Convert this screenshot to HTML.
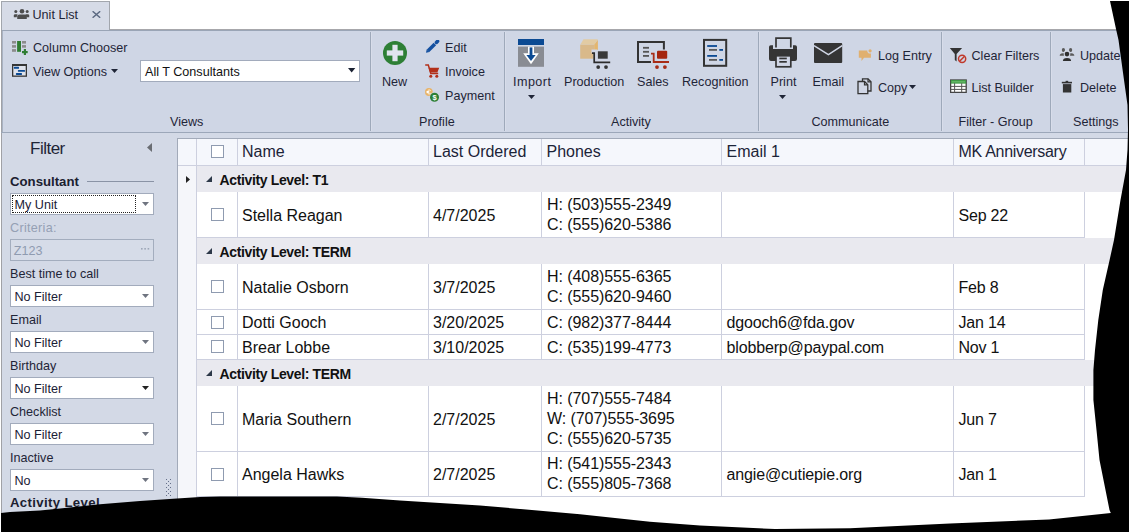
<!DOCTYPE html>
<html><head><meta charset="utf-8"><style>
html,body{margin:0;padding:0;}
body{width:1129px;height:532px;overflow:hidden;position:relative;background:#fff;font-family:"Liberation Sans", sans-serif;}
.t{position:absolute;white-space:nowrap;}
.b{position:absolute;}
</style></head><body>
<div class="b" style="left:1px;top:1px;width:109px;height:30px;background:#d6dbe7;border:1px solid #a2a6ad;border-bottom:none;box-sizing:border-box"></div>
<svg class="b" style="left:13px;top:8px" width="17" height="12" viewBox="0 0 17 12"><circle cx="9" cy="3.3" r="2.3" fill="#4d4d4d"/><circle cx="2.8" cy="3.6" r="1.5" fill="#4d4d4d"/><circle cx="14.2" cy="3.6" r="1.5" fill="#4d4d4d"/><path d="M4.2 11 V8.6 Q4.2 6.6 6.5 6.6 H11.5 Q13.8 6.6 13.8 8.6 V11Z" fill="#4d4d4d"/><path d="M0.8 9.2 V7.4 Q0.8 6.2 2.2 6.2 H4.6 L3.6 9.2Z" fill="#4d4d4d"/><path d="M16.2 9.2 V7.4 Q16.2 6.2 14.8 6.2 H12.4 L13.4 9.2Z" fill="#4d4d4d"/></svg>
<div class="t" style="left:32.5px;top:8.83px;font-size:12.6px;line-height:12.6px;color:#1f2537;font-weight:400;">Unit List</div>
<svg class="b" style="left:92px;top:11px" width="9" height="7" viewBox="0 0 9 7"><path d="M0.6 0.3 L8.2 6.7 M8.2 0.3 L0.6 6.7" stroke="#5a6880" stroke-width="1.5"/></svg>
<div class="b" style="left:110px;top:29px;width:1019px;height:1px;background:#a7a7ab"></div>
<div class="b" style="left:1px;top:30px;width:1128px;height:1px;background:#9aa5b6"></div>
<div class="b" style="left:1px;top:31px;width:1128px;height:101px;background:#cfd6e5"></div>
<div class="b" style="left:1px;top:30px;width:1px;height:502px;background:#a0a1a6"></div>
<div class="b" style="left:2px;top:31px;width:1px;height:501px;background:#a9b3c3"></div>
<div class="b" style="left:1px;top:132px;width:1128px;height:1px;background:#9ca7b9"></div>
<div class="b" style="left:370px;top:32px;width:1px;height:99px;background:#9ea9ba"></div>
<div class="b" style="left:371px;top:32px;width:1px;height:99px;background:#d8ddea"></div>
<div class="b" style="left:504px;top:32px;width:1px;height:99px;background:#9ea9ba"></div>
<div class="b" style="left:505px;top:32px;width:1px;height:99px;background:#d8ddea"></div>
<div class="b" style="left:758px;top:32px;width:1px;height:99px;background:#9ea9ba"></div>
<div class="b" style="left:759px;top:32px;width:1px;height:99px;background:#d8ddea"></div>
<div class="b" style="left:941px;top:32px;width:1px;height:99px;background:#9ea9ba"></div>
<div class="b" style="left:942px;top:32px;width:1px;height:99px;background:#d8ddea"></div>
<div class="b" style="left:1050px;top:32px;width:1px;height:99px;background:#9ea9ba"></div>
<div class="b" style="left:1051px;top:32px;width:1px;height:99px;background:#d8ddea"></div>
<svg class="b" style="left:12px;top:41px" width="17" height="15" viewBox="0 0 17 15"><rect x="0" y="0" width="4" height="2.6" fill="#8c8c8c"/><rect x="0" y="4.1" width="4" height="2.6" fill="#8c8c8c"/><rect x="0" y="8.1" width="4" height="2.7" fill="#8c8c8c"/><rect x="5.1" y="0" width="3.9" height="10.8" fill="#2f7d32"/><rect x="10" y="0" width="4" height="2.6" fill="#8c8c8c"/><rect x="10" y="4.1" width="4" height="2.6" fill="#8c8c8c"/><rect x="10" y="10" width="5.7" height="2.2" fill="#2f7d32"/><rect x="11.8" y="8" width="2.2" height="6" fill="#2f7d32"/></svg>
<div class="t" style="left:33px;top:42.33px;font-size:12.6px;line-height:12.6px;color:#1f2537;font-weight:400;">Column Chooser</div>
<svg class="b" style="left:12px;top:64px" width="15" height="13" viewBox="0 0 15 13"><rect x="0" y="0" width="15" height="12.8" fill="#353535"/><rect x="1.3" y="2" width="12.4" height="9.5" fill="#dfe3ec"/><rect x="1.9" y="2.8" width="5.1" height="2" rx="0.6" fill="#0b4a93"/><rect x="5.9" y="6" width="7.1" height="1.8" rx="0.6" fill="#0b4a93"/><rect x="3.9" y="9.1" width="6.1" height="1.8" rx="0.6" fill="#0b4a93"/></svg>
<div class="t" style="left:33px;top:65.83px;font-size:12.6px;line-height:12.6px;color:#1f2537;font-weight:400;">View Options</div>
<svg class="b" style="left:111px;top:69px" width="7" height="4" viewBox="0 0 7 4"><path d="M0 0 H7 L3.5 4Z" fill="#1f2537"/></svg>
<div class="b" style="left:140px;top:60px;width:220px;height:22px;background:#fff;border:1px solid #a2abbc;box-sizing:border-box"></div>
<div class="t" style="left:145px;top:65.83px;font-size:12.6px;line-height:12.6px;color:#111;font-weight:400;">All T Consultants</div>
<svg class="b" style="left:348px;top:68px" width="8" height="5" viewBox="0 0 8 5"><path d="M0 0 H7.3 L3.65 4.6Z" fill="#1b2233"/></svg>
<div class="t" style="left:170px;top:115.93px;font-size:12.6px;line-height:12.6px;color:#1f2537;font-weight:400;">Views</div>
<svg class="b" style="left:383px;top:41px" width="24" height="24" viewBox="0 0 24 24"><circle cx="12" cy="12" r="12" fill="#2d7f35"/><rect x="9.4" y="3.8" width="5.2" height="16.4" fill="#e0e4ee"/><rect x="3.8" y="9.4" width="16.4" height="5.2" fill="#e0e4ee"/></svg>
<div class="t" style="left:382px;top:76.13px;font-size:12.6px;line-height:12.6px;color:#1f2537;font-weight:400;">New</div>
<svg class="b" style="left:425px;top:40px" width="15" height="14" viewBox="0 0 15 14"><path d="M1 12.8 L1.7 9.3 L4.5 12.1Z" fill="#1450a0"/><path d="M3.1 10.7 L9.9 3.9" stroke="#1450a0" stroke-width="3.5"/><path d="M11.4 2.4 L12.6 1.2" stroke="#1450a0" stroke-width="3.5" stroke-linecap="round"/></svg>
<div class="t" style="left:445px;top:42.33px;font-size:12.6px;line-height:12.6px;color:#1f2537;font-weight:400;">Edit</div>
<svg class="b" style="left:425px;top:64px" width="15" height="14" viewBox="0 0 15 14"><path d="M0.2 1 H3.3 L5.8 9.4 H13.2" fill="none" stroke="#b3301a" stroke-width="1.5"/><path d="M3.6 3.8 H14.2 L12.4 8.6 H5Z" fill="#b3301a"/><circle cx="5.8" cy="12.2" r="1.5" fill="#b3301a"/><circle cx="11.8" cy="12.2" r="1.5" fill="#b3301a"/></svg>
<div class="t" style="left:445px;top:65.63px;font-size:12.6px;line-height:12.6px;color:#1f2537;font-weight:400;">Invoice</div>
<svg class="b" style="left:424px;top:87px" width="16" height="16" viewBox="0 0 16 16"><circle cx="4.9" cy="5" r="3.9" fill="#e8b46a"/><path d="M6.6 3.6 Q5.6 2.7 4.5 3.2 Q3.3 3.8 3.4 5 Q3.5 6.4 4.6 6.8 Q5.6 7.1 6.6 6.4 M2.5 4.5 H5.3 M2.5 5.6 H5.3" fill="none" stroke="#fff" stroke-width="0.9"/><circle cx="10.5" cy="10.3" r="5" fill="#d0d6e5"/><circle cx="10.5" cy="10.3" r="4.5" fill="#2d7f35"/><text x="10.5" y="13.1" font-size="7.6" font-family="Liberation Sans" font-weight="700" fill="#fff" text-anchor="middle">$</text></svg>
<div class="t" style="left:445px;top:89.53px;font-size:12.6px;line-height:12.6px;color:#1f2537;font-weight:400;">Payment</div>
<div class="t" style="left:419px;top:115.93px;font-size:12.6px;line-height:12.6px;color:#1f2537;font-weight:400;">Profile</div>
<svg class="b" style="left:518px;top:39px" width="26" height="28" viewBox="0 0 26 28"><rect x="0" y="0" width="26" height="6" fill="#0b4a93"/><rect x="0" y="7.6" width="26" height="20.2" fill="#898c93"/><rect x="10" y="7.6" width="6" height="7" fill="#fff"/><path d="M5.2 14.2 H20.8 L13 25.2Z" fill="#fff"/><rect x="11.6" y="8.4" width="2.8" height="8" fill="#0b4a93"/><path d="M8.4 16 H17.6 L13 22Z" fill="#0b4a93"/></svg>
<div class="t" style="left:513px;top:75.93px;font-size:12.6px;line-height:12.6px;color:#1f2537;font-weight:400;letter-spacing:0.45px">Import</div>
<svg class="b" style="left:528px;top:95px" width="7" height="4" viewBox="0 0 7 4"><path d="M0 0 H7 L3.5 4Z" fill="#1f2537"/></svg>
<svg class="b" style="left:580px;top:39px" width="31" height="31" viewBox="0 0 31 31"><path d="M0.2 5.8 L3.5 0.2 H17.9 L14.2 5.8Z" fill="#e2cba3"/><path d="M0.2 5.8 H14.2 V19.7 H0.2Z" fill="#d9b98a"/><path d="M14.2 5.8 L17.9 0.8 V12 L14.2 14Z" fill="#e4b66e"/><path d="M11.5 12.3 H15.2 V22 H30" fill="none" stroke="#d0d6e5" stroke-width="3.4"/><rect x="16.4" y="10.8" width="12.8" height="10.4" fill="#d0d6e5"/><path d="M12 14.1 H14.2 V23.4 H30.2" fill="none" stroke="#2b2b2b" stroke-width="1.7"/><rect x="17.9" y="12.3" width="9.8" height="7.4" fill="#3a3a3a"/><circle cx="18.2" cy="28.1" r="1.9" fill="#333"/><circle cx="26" cy="28.1" r="1.9" fill="#333"/></svg>
<div class="t" style="left:564px;top:75.93px;font-size:12.6px;line-height:12.6px;color:#1f2537;font-weight:400;">Production</div>
<svg class="b" style="left:637px;top:39px" width="33" height="31" viewBox="0 0 33 31"><path d="M26.9 10.5 V3 H1 V22.9 H14" fill="none" stroke="#333" stroke-width="2"/><rect x="6" y="7.9" width="6" height="1.8" fill="#555"/><rect x="6" y="11.9" width="6" height="1.8" fill="#555"/><rect x="6" y="16" width="6" height="1.8" fill="#555"/><path d="M14 14.6 H16.7 V23 H32" fill="none" stroke="#a82c16" stroke-width="1.8"/><rect x="20" y="11.8" width="10.2" height="7.9" rx="1" fill="#a5260f"/><circle cx="20" cy="28.1" r="1.9" fill="#a82c16"/><circle cx="27.9" cy="28.1" r="1.9" fill="#a82c16"/></svg>
<div class="t" style="left:637px;top:75.93px;font-size:12.6px;line-height:12.6px;color:#1f2537;font-weight:400;">Sales</div>
<svg class="b" style="left:703px;top:38px" width="25" height="30" viewBox="0 0 25 30"><rect x="1" y="1.9" width="22.2" height="25.9" fill="none" stroke="#333" stroke-width="2"/><rect x="4.2" y="7.1" width="9.8" height="1.8" fill="#0b4a93"/><rect x="6" y="11" width="8" height="1.8" fill="#5a5a5a"/><rect x="16.3" y="11" width="3.7" height="1.8" fill="#0b4a93"/><rect x="4.2" y="17" width="9.8" height="1.8" fill="#0b4a93"/><rect x="6" y="21" width="8" height="1.8" fill="#5a5a5a"/><rect x="16.3" y="21" width="3.7" height="1.8" fill="#0b4a93"/></svg>
<div class="t" style="left:682px;top:75.93px;font-size:12.6px;line-height:12.6px;color:#1f2537;font-weight:400;">Recognition</div>
<div class="t" style="left:611px;top:115.93px;font-size:12.6px;line-height:12.6px;color:#1f2537;font-weight:400;">Activity</div>
<svg class="b" style="left:768px;top:36px" width="30" height="32" viewBox="0 0 30 32"><path d="M8 11.5 V2.2 H22.8 V11.5" fill="none" stroke="#353535" stroke-width="1.7"/><path d="M1 11 Q1 9.2 2.8 9.2 H5 V13 H25 V9.2 H27.2 Q29 9.2 29 11 V23 Q29 25 27 25 H3 Q1 25 1 23Z" fill="#353535"/><rect x="8" y="19.8" width="14.8" height="11" fill="#d0d6e5" stroke="#353535" stroke-width="1.7"/><rect x="11.3" y="21.6" width="7.5" height="1.7" fill="#353535"/><rect x="11.3" y="25" width="7.5" height="1.7" fill="#353535"/></svg>
<div class="t" style="left:770.5px;top:76.03px;font-size:12.6px;line-height:12.6px;color:#1f2537;font-weight:400;">Print</div>
<svg class="b" style="left:779px;top:95px" width="7" height="4" viewBox="0 0 7 4"><path d="M0 0 H7 L3.5 4Z" fill="#1f2537"/></svg>
<svg class="b" style="left:814px;top:43px" width="29" height="20" viewBox="0 0 29 20"><rect x="0" y="0" width="28.2" height="20" rx="1" fill="#353535"/><path d="M0 2.6 L14.4 11.7 L28.2 2.6" fill="none" stroke="#d0d6e5" stroke-width="1.5"/></svg>
<div class="t" style="left:812.5px;top:76.03px;font-size:12.6px;line-height:12.6px;color:#1f2537;font-weight:400;">Email</div>
<svg class="b" style="left:858px;top:49px" width="14" height="13" viewBox="0 0 14 13"><path d="M0.8 1.4 H12.9 V8.8 H6 L3.5 12 V8.8 H0.8Z" fill="#e0b070"/><circle cx="12.1" cy="1.8" r="2.8" fill="#d0d6e5"/><circle cx="12.1" cy="1.8" r="1.6" fill="#e0b070"/></svg>
<div class="t" style="left:878px;top:49.63px;font-size:12.6px;line-height:12.6px;color:#1f2537;font-weight:400;">Log Entry</div>
<svg class="b" style="left:857px;top:78px" width="15" height="17" viewBox="0 0 15 17"><path d="M5.5 0.8 H11 L14 3.8 V13 H5.5Z" fill="#d0d6e5" stroke="#333" stroke-width="1.3"/><path d="M11 0.8 V3.8 H14" fill="none" stroke="#333" stroke-width="1.2"/><path d="M1 3.5 H7.5 L10.8 6.8 V15.6 H1Z" fill="#d0d6e5" stroke="#333" stroke-width="1.3"/><path d="M7.5 3.5 V6.8 H10.8" fill="none" stroke="#333" stroke-width="1.2"/></svg>
<div class="t" style="left:878px;top:81.93px;font-size:12.6px;line-height:12.6px;color:#1f2537;font-weight:400;">Copy</div>
<svg class="b" style="left:909px;top:85px" width="7" height="4" viewBox="0 0 7 4"><path d="M0 0 H7 L3.5 4Z" fill="#1f2537"/></svg>
<div class="t" style="left:811.5px;top:115.93px;font-size:12.6px;line-height:12.6px;color:#1f2537;font-weight:400;">Communicate</div>
<svg class="b" style="left:949px;top:47px" width="18" height="17" viewBox="0 0 18 17"><path d="M0.8 1 H13.1 L7.6 7 V14.5 L5.8 13 V7Z" fill="#333"/><circle cx="13.1" cy="11.8" r="3.6" fill="#d0d6e5" stroke="#c0392b" stroke-width="1.5"/><path d="M10.6 14.3 L15.6 9.3" stroke="#c0392b" stroke-width="1.5"/></svg>
<div class="t" style="left:971.5px;top:50.13px;font-size:12.6px;line-height:12.6px;color:#1f2537;font-weight:400;">Clear Filters</div>
<svg class="b" style="left:950px;top:79px" width="17" height="14" viewBox="0 0 17 14"><rect x="0.6" y="1" width="15.6" height="12.4" fill="#fff" stroke="#444" stroke-width="1.3"/><rect x="1.2" y="1.5" width="14.4" height="2.6" fill="#62b565" stroke="#3f9a45" stroke-width="1"/><path d="M0.6 7.4 H16.2 M0.6 10.4 H16.2 M4.6 4.2 V13.4 M11.7 4.2 V13.4" stroke="#555" stroke-width="1"/></svg>
<div class="t" style="left:971.5px;top:82.33px;font-size:12.6px;line-height:12.6px;color:#1f2537;font-weight:400;">List Builder</div>
<div class="t" style="left:958.5px;top:115.93px;font-size:12.6px;line-height:12.6px;color:#1f2537;font-weight:400;">Filter - Group</div>
<svg class="b" style="left:1059px;top:47px" width="16" height="15" viewBox="0 0 16 15"><ellipse cx="4.4" cy="2.9" rx="1.6" ry="2" fill="#5a5a5a"/><ellipse cx="11.6" cy="2.9" rx="1.6" ry="2" fill="#5a5a5a"/><path d="M0.7 8.8 Q0.7 6.2 3.6 6.2 H6.5 V8.8Z" fill="#5a5a5a"/><path d="M15.3 8.8 Q15.3 6.2 12.4 6.2 H9.5 V8.8Z" fill="#5a5a5a"/><circle cx="8" cy="7.1" r="3.3" fill="#d0d6e5"/><circle cx="8" cy="7.1" r="2.3" fill="#2e2e2e"/><path d="M3.1 14.2 Q3.1 10.4 8 10.4 Q12.9 10.4 12.9 14.2Z" fill="#d0d6e5"/><path d="M3.9 14 Q3.9 11 8 11 Q12.1 11 12.1 14Z" fill="#2e2e2e"/></svg>
<div class="t" style="left:1080px;top:50.13px;font-size:12.6px;line-height:12.6px;color:#1f2537;font-weight:400;">Update</div>
<svg class="b" style="left:1061px;top:80px" width="12" height="14" viewBox="0 0 12 14"><rect x="0.8" y="1.8" width="10.2" height="1.6" fill="#333"/><rect x="4.6" y="0.8" width="2.6" height="1.2" fill="#333"/><rect x="1.9" y="4.1" width="8.4" height="8.4" fill="#333"/></svg>
<div class="t" style="left:1080px;top:82.33px;font-size:12.6px;line-height:12.6px;color:#1f2537;font-weight:400;">Delete</div>
<div class="t" style="left:1073px;top:115.93px;font-size:12.6px;line-height:12.6px;color:#1f2537;font-weight:400;">Settings</div>
<div class="b" style="left:2px;top:133px;width:1127px;height:399px;background:#d3d9e6"></div>
<div class="t" style="left:30px;top:139.81px;font-size:17px;line-height:17px;color:#1f2537;font-weight:400;letter-spacing:-0.5px">Filter</div>
<svg class="b" style="left:147px;top:143px" width="5" height="9" viewBox="0 0 5 9"><path d="M5 0 V9 L0 4.5Z" fill="#6a6d73"/></svg>
<div class="t" style="left:10px;top:174.63px;font-size:13.2px;line-height:13.2px;color:#1b2030;font-weight:700;">Consultant</div>
<div class="b" style="left:87px;top:181px;width:67px;height:1px;background:#8a93a5"></div>
<div class="b" style="left:10px;top:193px;width:144px;height:22px;background:#fff;border:1px solid #a2abbc;box-sizing:border-box"></div>
<div class="t" style="left:14.5px;top:199.33px;font-size:12.6px;line-height:12.6px;color:#1a2035;font-weight:400;">My Unit</div>
<svg class="b" style="left:142px;top:202px" width="7" height="4" viewBox="0 0 7 4"><path d="M0 0 H7 L3.5 4Z" fill="#6f7480"/></svg>
<div class="b" style="left:12px;top:195px;width:124px;height:18px;border:1px dotted #222;box-sizing:border-box"></div>
<div class="t" style="left:10px;top:221.73px;font-size:12.6px;line-height:12.6px;color:#95a0b4;font-weight:400;letter-spacing:0.3px">Criteria:</div>
<div class="b" style="left:10px;top:239px;width:144px;height:22px;background:#d6dce8;border:1px solid #a3adbe;box-sizing:border-box"></div>
<div class="t" style="left:13.7px;top:245.33px;font-size:12.6px;line-height:12.6px;color:#8f9bb0;font-weight:400;">Z123</div>
<svg class="b" style="left:141px;top:248px" width="9" height="2" viewBox="0 0 9 2"><rect x="0" y="0" width="1.6" height="1.6" fill="#9da7b8"/><rect x="3.3" y="0" width="1.6" height="1.6" fill="#9da7b8"/><rect x="6.6" y="0" width="1.6" height="1.6" fill="#9da7b8"/></svg>
<div class="t" style="left:10px;top:268.23px;font-size:12.6px;line-height:12.6px;color:#1f2537;font-weight:400;">Best time to call</div>
<div class="b" style="left:10px;top:285px;width:144px;height:22px;background:#fff;border:1px solid #a2abbc;box-sizing:border-box"></div>
<div class="t" style="left:14.5px;top:291.33px;font-size:12.6px;line-height:12.6px;color:#1a2035;font-weight:400;">No Filter</div>
<svg class="b" style="left:142px;top:294px" width="7" height="4" viewBox="0 0 7 4"><path d="M0 0 H7 L3.5 4Z" fill="#6f7480"/></svg>
<div class="t" style="left:10px;top:314.33px;font-size:12.6px;line-height:12.6px;color:#1f2537;font-weight:400;">Email</div>
<div class="b" style="left:10px;top:331px;width:144px;height:22px;background:#fff;border:1px solid #a2abbc;box-sizing:border-box"></div>
<div class="t" style="left:14.5px;top:337.33px;font-size:12.6px;line-height:12.6px;color:#1a2035;font-weight:400;">No Filter</div>
<svg class="b" style="left:142px;top:340px" width="7" height="4" viewBox="0 0 7 4"><path d="M0 0 H7 L3.5 4Z" fill="#6f7480"/></svg>
<div class="t" style="left:10px;top:360.33px;font-size:12.6px;line-height:12.6px;color:#1f2537;font-weight:400;">Birthday</div>
<div class="b" style="left:10px;top:377px;width:144px;height:22px;background:#fff;border:1px solid #a2abbc;box-sizing:border-box"></div>
<div class="t" style="left:14.5px;top:383.33px;font-size:12.6px;line-height:12.6px;color:#1a2035;font-weight:400;">No Filter</div>
<svg class="b" style="left:142px;top:386px" width="7" height="4" viewBox="0 0 7 4"><path d="M0 0 H7 L3.5 4Z" fill="#222"/></svg>
<div class="t" style="left:10px;top:406.33px;font-size:12.6px;line-height:12.6px;color:#1f2537;font-weight:400;">Checklist</div>
<div class="b" style="left:10px;top:423px;width:144px;height:22px;background:#fff;border:1px solid #a2abbc;box-sizing:border-box"></div>
<div class="t" style="left:14.5px;top:429.33px;font-size:12.6px;line-height:12.6px;color:#1a2035;font-weight:400;">No Filter</div>
<svg class="b" style="left:142px;top:432px" width="7" height="4" viewBox="0 0 7 4"><path d="M0 0 H7 L3.5 4Z" fill="#6f7480"/></svg>
<div class="t" style="left:10px;top:452.33px;font-size:12.6px;line-height:12.6px;color:#1f2537;font-weight:400;">Inactive</div>
<div class="b" style="left:10px;top:469px;width:144px;height:22px;background:#fff;border:1px solid #a2abbc;box-sizing:border-box"></div>
<div class="t" style="left:14.5px;top:475.33px;font-size:12.6px;line-height:12.6px;color:#1a2035;font-weight:400;">No</div>
<svg class="b" style="left:142px;top:478px" width="7" height="4" viewBox="0 0 7 4"><path d="M0 0 H7 L3.5 4Z" fill="#6f7480"/></svg>
<div class="t" style="left:10px;top:496.33px;font-size:13.2px;line-height:13.2px;color:#1b2030;font-weight:700;letter-spacing:0.35px">Activity Level</div>
<svg class="b" style="left:165px;top:478px" width="8" height="19" viewBox="0 0 8 19"><rect x="1" y="1" width="1" height="1" fill="#66708a"/><rect x="5" y="1" width="1" height="1" fill="#66708a"/><rect x="3" y="3" width="1" height="1" fill="#66708a"/><rect x="1" y="5" width="1" height="1" fill="#66708a"/><rect x="5" y="5" width="1" height="1" fill="#66708a"/><rect x="3" y="7" width="1" height="1" fill="#66708a"/><rect x="1" y="9" width="1" height="1" fill="#66708a"/><rect x="5" y="9" width="1" height="1" fill="#66708a"/><rect x="3" y="11" width="1" height="1" fill="#66708a"/><rect x="1" y="13" width="1" height="1" fill="#66708a"/><rect x="5" y="13" width="1" height="1" fill="#66708a"/><rect x="3" y="15" width="1" height="1" fill="#66708a"/><rect x="1" y="17" width="1" height="1" fill="#66708a"/><rect x="5" y="17" width="1" height="1" fill="#66708a"/><rect x="3" y="1" width="1" height="1" fill="#dde1eb"/><rect x="1" y="3" width="1" height="1" fill="#dde1eb"/><rect x="5" y="3" width="1" height="1" fill="#dde1eb"/><rect x="3" y="5" width="1" height="1" fill="#dde1eb"/><rect x="1" y="7" width="1" height="1" fill="#dde1eb"/><rect x="5" y="7" width="1" height="1" fill="#dde1eb"/><rect x="3" y="9" width="1" height="1" fill="#dde1eb"/><rect x="1" y="11" width="1" height="1" fill="#dde1eb"/><rect x="5" y="11" width="1" height="1" fill="#dde1eb"/><rect x="3" y="13" width="1" height="1" fill="#dde1eb"/><rect x="1" y="15" width="1" height="1" fill="#dde1eb"/><rect x="5" y="15" width="1" height="1" fill="#dde1eb"/><rect x="3" y="17" width="1" height="1" fill="#dde1eb"/></svg>
<div class="b" style="left:177px;top:138px;width:952px;height:394px;background:#fff"></div>
<div class="b" style="left:177px;top:138px;width:1px;height:394px;background:#a2aab9"></div>
<div class="b" style="left:177px;top:138px;width:952px;height:1px;background:#a2aab9"></div>
<div class="b" style="left:178px;top:139px;width:951px;height:26px;background:#f5f7fc"></div>
<div class="b" style="left:178px;top:165px;width:951px;height:1px;background:#cdd0df"></div>
<div class="b" style="left:178px;top:166px;width:18px;height:366px;background:#f5f6fa"></div>
<div class="b" style="left:196px;top:139px;width:1px;height:393px;background:#cdd0df"></div>
<div class="b" style="left:237px;top:139px;width:1px;height:26px;background:#cdd0df"></div>
<div class="b" style="left:428px;top:139px;width:1px;height:26px;background:#cdd0df"></div>
<div class="b" style="left:541px;top:139px;width:1px;height:26px;background:#cdd0df"></div>
<div class="b" style="left:721px;top:139px;width:1px;height:26px;background:#cdd0df"></div>
<div class="b" style="left:953px;top:139px;width:1px;height:26px;background:#cdd0df"></div>
<div class="b" style="left:1084px;top:139px;width:1px;height:26px;background:#cdd0df"></div>
<div class="b" style="left:211px;top:145px;width:13px;height:13px;background:#fff;border:1px solid #8f9bb0;box-sizing:border-box"></div>
<div class="t" style="left:242px;top:143.66px;font-size:16px;line-height:16px;color:#1c2438;font-weight:400;">Name</div>
<div class="t" style="left:433px;top:143.66px;font-size:16px;line-height:16px;color:#1c2438;font-weight:400;">Last Ordered</div>
<div class="t" style="left:546.5px;top:143.66px;font-size:16px;line-height:16px;color:#1c2438;font-weight:400;">Phones</div>
<div class="t" style="left:726.5px;top:143.66px;font-size:16px;line-height:16px;color:#1c2438;font-weight:400;">Email 1</div>
<div class="t" style="left:958.5px;top:143.66px;font-size:16px;line-height:16px;color:#1c2438;font-weight:400;letter-spacing:-0.3px">MK Anniversary</div>
<div class="b" style="left:197px;top:166px;width:932px;height:26px;background:#e9e9ef"></div>
<svg class="b" style="left:206px;top:176px" width="6" height="6" viewBox="0 0 6 6"><path d="M6 0 V6 H0Z" fill="#2d3848"/></svg>
<div class="t" style="left:219.5px;top:172.65px;font-size:14px;line-height:14px;color:#111;font-weight:700;letter-spacing:-0.36px">Activity Level: T1</div>
<svg class="b" style="left:186px;top:176px" width="4" height="7" viewBox="0 0 4 7"><path d="M0 0 L4 3.5 L0 7Z" fill="#222"/></svg>
<div class="b" style="left:237px;top:192px;width:1px;height:46px;background:#cdd0df"></div>
<div class="b" style="left:428px;top:192px;width:1px;height:46px;background:#cdd0df"></div>
<div class="b" style="left:541px;top:192px;width:1px;height:46px;background:#cdd0df"></div>
<div class="b" style="left:721px;top:192px;width:1px;height:46px;background:#cdd0df"></div>
<div class="b" style="left:953px;top:192px;width:1px;height:46px;background:#cdd0df"></div>
<div class="b" style="left:1084px;top:192px;width:1px;height:46px;background:#cdd0df"></div>
<div class="b" style="left:197px;top:237px;width:887px;height:1px;background:#cdd0df"></div>
<div class="b" style="left:211px;top:208px;width:13px;height:13px;background:#fff;border:1px solid #8f9bb0;box-sizing:border-box"></div>
<div class="t" style="left:242px;top:207.66px;font-size:16px;line-height:16px;color:#111;font-weight:400;">Stella Reagan</div>
<div class="t" style="left:433px;top:207.66px;font-size:16px;line-height:16px;color:#111;font-weight:400;">4/7/2025</div>
<div class="t" style="left:726.5px;top:207.66px;font-size:16px;line-height:16px;color:#111;font-weight:400;letter-spacing:-0.15px"></div>
<div class="t" style="left:958.5px;top:207.66px;font-size:16px;line-height:16px;color:#111;font-weight:400;letter-spacing:-0.2px">Sep 22</div>
<div class="t" style="left:547px;top:196.66px;font-size:16px;line-height:16px;color:#111;font-weight:400;letter-spacing:-0.07px">H: (503)555-2349</div>
<div class="t" style="left:547px;top:216.66px;font-size:16px;line-height:16px;color:#111;font-weight:400;letter-spacing:-0.07px">C: (555)620-5386</div>
<div class="b" style="left:197px;top:238px;width:932px;height:26px;background:#e9e9ef"></div>
<svg class="b" style="left:206px;top:248px" width="6" height="6" viewBox="0 0 6 6"><path d="M6 0 V6 H0Z" fill="#2d3848"/></svg>
<div class="t" style="left:219.5px;top:244.65px;font-size:14px;line-height:14px;color:#111;font-weight:700;letter-spacing:-0.36px">Activity Level: TERM</div>
<div class="b" style="left:237px;top:264px;width:1px;height:46px;background:#cdd0df"></div>
<div class="b" style="left:428px;top:264px;width:1px;height:46px;background:#cdd0df"></div>
<div class="b" style="left:541px;top:264px;width:1px;height:46px;background:#cdd0df"></div>
<div class="b" style="left:721px;top:264px;width:1px;height:46px;background:#cdd0df"></div>
<div class="b" style="left:953px;top:264px;width:1px;height:46px;background:#cdd0df"></div>
<div class="b" style="left:1084px;top:264px;width:1px;height:46px;background:#cdd0df"></div>
<div class="b" style="left:197px;top:309px;width:887px;height:1px;background:#cdd0df"></div>
<div class="b" style="left:211px;top:280px;width:13px;height:13px;background:#fff;border:1px solid #8f9bb0;box-sizing:border-box"></div>
<div class="t" style="left:242px;top:279.66px;font-size:16px;line-height:16px;color:#111;font-weight:400;">Natalie Osborn</div>
<div class="t" style="left:433px;top:279.66px;font-size:16px;line-height:16px;color:#111;font-weight:400;">3/7/2025</div>
<div class="t" style="left:726.5px;top:279.66px;font-size:16px;line-height:16px;color:#111;font-weight:400;letter-spacing:-0.15px"></div>
<div class="t" style="left:958.5px;top:279.66px;font-size:16px;line-height:16px;color:#111;font-weight:400;letter-spacing:-0.2px">Feb 8</div>
<div class="t" style="left:547px;top:268.66px;font-size:16px;line-height:16px;color:#111;font-weight:400;letter-spacing:-0.07px">H: (408)555-6365</div>
<div class="t" style="left:547px;top:288.66px;font-size:16px;line-height:16px;color:#111;font-weight:400;letter-spacing:-0.07px">C: (555)620-9460</div>
<div class="b" style="left:237px;top:310px;width:1px;height:25px;background:#cdd0df"></div>
<div class="b" style="left:428px;top:310px;width:1px;height:25px;background:#cdd0df"></div>
<div class="b" style="left:541px;top:310px;width:1px;height:25px;background:#cdd0df"></div>
<div class="b" style="left:721px;top:310px;width:1px;height:25px;background:#cdd0df"></div>
<div class="b" style="left:953px;top:310px;width:1px;height:25px;background:#cdd0df"></div>
<div class="b" style="left:1084px;top:310px;width:1px;height:25px;background:#cdd0df"></div>
<div class="b" style="left:197px;top:334px;width:887px;height:1px;background:#cdd0df"></div>
<div class="b" style="left:211px;top:316px;width:13px;height:13px;background:#fff;border:1px solid #8f9bb0;box-sizing:border-box"></div>
<div class="t" style="left:242px;top:315.16px;font-size:16px;line-height:16px;color:#111;font-weight:400;">Dotti Gooch</div>
<div class="t" style="left:433px;top:315.16px;font-size:16px;line-height:16px;color:#111;font-weight:400;">3/20/2025</div>
<div class="t" style="left:726.5px;top:315.16px;font-size:16px;line-height:16px;color:#111;font-weight:400;letter-spacing:-0.15px">dgooch6@fda.gov</div>
<div class="t" style="left:958.5px;top:315.16px;font-size:16px;line-height:16px;color:#111;font-weight:400;letter-spacing:-0.2px">Jan 14</div>
<div class="t" style="left:547px;top:315.16px;font-size:16px;line-height:16px;color:#111;font-weight:400;letter-spacing:-0.07px">C: (982)377-8444</div>
<div class="b" style="left:237px;top:335px;width:1px;height:25px;background:#cdd0df"></div>
<div class="b" style="left:428px;top:335px;width:1px;height:25px;background:#cdd0df"></div>
<div class="b" style="left:541px;top:335px;width:1px;height:25px;background:#cdd0df"></div>
<div class="b" style="left:721px;top:335px;width:1px;height:25px;background:#cdd0df"></div>
<div class="b" style="left:953px;top:335px;width:1px;height:25px;background:#cdd0df"></div>
<div class="b" style="left:1084px;top:335px;width:1px;height:25px;background:#cdd0df"></div>
<div class="b" style="left:197px;top:359px;width:887px;height:1px;background:#cdd0df"></div>
<div class="b" style="left:211px;top:340px;width:13px;height:13px;background:#fff;border:1px solid #8f9bb0;box-sizing:border-box"></div>
<div class="t" style="left:242px;top:340.16px;font-size:16px;line-height:16px;color:#111;font-weight:400;">Brear Lobbe</div>
<div class="t" style="left:433px;top:340.16px;font-size:16px;line-height:16px;color:#111;font-weight:400;">3/10/2025</div>
<div class="t" style="left:726.5px;top:340.16px;font-size:16px;line-height:16px;color:#111;font-weight:400;letter-spacing:-0.15px">blobberp@paypal.com</div>
<div class="t" style="left:958.5px;top:340.16px;font-size:16px;line-height:16px;color:#111;font-weight:400;letter-spacing:-0.2px">Nov 1</div>
<div class="t" style="left:547px;top:340.16px;font-size:16px;line-height:16px;color:#111;font-weight:400;letter-spacing:-0.07px">C: (535)199-4773</div>
<div class="b" style="left:197px;top:360px;width:932px;height:26px;background:#e9e9ef"></div>
<svg class="b" style="left:206px;top:370px" width="6" height="6" viewBox="0 0 6 6"><path d="M6 0 V6 H0Z" fill="#2d3848"/></svg>
<div class="t" style="left:219.5px;top:366.65px;font-size:14px;line-height:14px;color:#111;font-weight:700;letter-spacing:-0.36px">Activity Level: TERM</div>
<div class="b" style="left:237px;top:386px;width:1px;height:66px;background:#cdd0df"></div>
<div class="b" style="left:428px;top:386px;width:1px;height:66px;background:#cdd0df"></div>
<div class="b" style="left:541px;top:386px;width:1px;height:66px;background:#cdd0df"></div>
<div class="b" style="left:721px;top:386px;width:1px;height:66px;background:#cdd0df"></div>
<div class="b" style="left:953px;top:386px;width:1px;height:66px;background:#cdd0df"></div>
<div class="b" style="left:1084px;top:386px;width:1px;height:66px;background:#cdd0df"></div>
<div class="b" style="left:197px;top:451px;width:887px;height:1px;background:#cdd0df"></div>
<div class="b" style="left:211px;top:412px;width:13px;height:13px;background:#fff;border:1px solid #8f9bb0;box-sizing:border-box"></div>
<div class="t" style="left:242px;top:411.66px;font-size:16px;line-height:16px;color:#111;font-weight:400;">Maria Southern</div>
<div class="t" style="left:433px;top:411.66px;font-size:16px;line-height:16px;color:#111;font-weight:400;">2/7/2025</div>
<div class="t" style="left:726.5px;top:411.66px;font-size:16px;line-height:16px;color:#111;font-weight:400;letter-spacing:-0.15px"></div>
<div class="t" style="left:958.5px;top:411.66px;font-size:16px;line-height:16px;color:#111;font-weight:400;letter-spacing:-0.2px">Jun 7</div>
<div class="t" style="left:547px;top:390.66px;font-size:16px;line-height:16px;color:#111;font-weight:400;letter-spacing:-0.07px">H: (707)555-7484</div>
<div class="t" style="left:547px;top:410.66px;font-size:16px;line-height:16px;color:#111;font-weight:400;letter-spacing:-0.07px">W: (707)555-3695</div>
<div class="t" style="left:547px;top:430.66px;font-size:16px;line-height:16px;color:#111;font-weight:400;letter-spacing:-0.07px">C: (555)620-5735</div>
<div class="b" style="left:237px;top:452px;width:1px;height:45px;background:#cdd0df"></div>
<div class="b" style="left:428px;top:452px;width:1px;height:45px;background:#cdd0df"></div>
<div class="b" style="left:541px;top:452px;width:1px;height:45px;background:#cdd0df"></div>
<div class="b" style="left:721px;top:452px;width:1px;height:45px;background:#cdd0df"></div>
<div class="b" style="left:953px;top:452px;width:1px;height:45px;background:#cdd0df"></div>
<div class="b" style="left:1084px;top:452px;width:1px;height:45px;background:#cdd0df"></div>
<div class="b" style="left:197px;top:496px;width:887px;height:1px;background:#cdd0df"></div>
<div class="b" style="left:211px;top:468px;width:13px;height:13px;background:#fff;border:1px solid #8f9bb0;box-sizing:border-box"></div>
<div class="t" style="left:242px;top:467.16px;font-size:16px;line-height:16px;color:#111;font-weight:400;">Angela Hawks</div>
<div class="t" style="left:433px;top:467.16px;font-size:16px;line-height:16px;color:#111;font-weight:400;">2/7/2025</div>
<div class="t" style="left:726.5px;top:467.16px;font-size:16px;line-height:16px;color:#111;font-weight:400;letter-spacing:-0.15px">angie@cutiepie.org</div>
<div class="t" style="left:958.5px;top:467.16px;font-size:16px;line-height:16px;color:#111;font-weight:400;letter-spacing:-0.2px">Jan 1</div>
<div class="t" style="left:547px;top:456.16px;font-size:16px;line-height:16px;color:#111;font-weight:400;letter-spacing:-0.07px">H: (541)555-2343</div>
<div class="t" style="left:547px;top:476.16px;font-size:16px;line-height:16px;color:#111;font-weight:400;letter-spacing:-0.07px">C: (555)805-7368</div>
<svg class="b" style="left:0;top:0" width="1129" height="532"><polygon points="1129,1 1110,1 1116,29 1118.5,40 1124,80 1127.5,105 1128,130 1127.5,150 1126,170 1120.5,200 1114,240 1109.6,260 1102.8,290 1098.3,320 1095,350 1093.4,370 1093.4,400 1096.5,430 1099.5,460 1102.5,475 1109.5,510 1110.8,513 1049,519.4 950,523.6 850,528.3 775,529 700,525.4 650,521.8 580,514.3 480,505.4 400,500.4 362,497.7 337,496.6 220,496.6 200,497 177,498.6 140,501 100,504.2 60,508.6 40,510.5 10,512 1,513 1,532 1129,532" fill="#000"/><rect x="0" y="0" width="1129" height="1" fill="#fff"/><rect x="0" y="0" width="1" height="532" fill="#fff"/></svg>
</body></html>
